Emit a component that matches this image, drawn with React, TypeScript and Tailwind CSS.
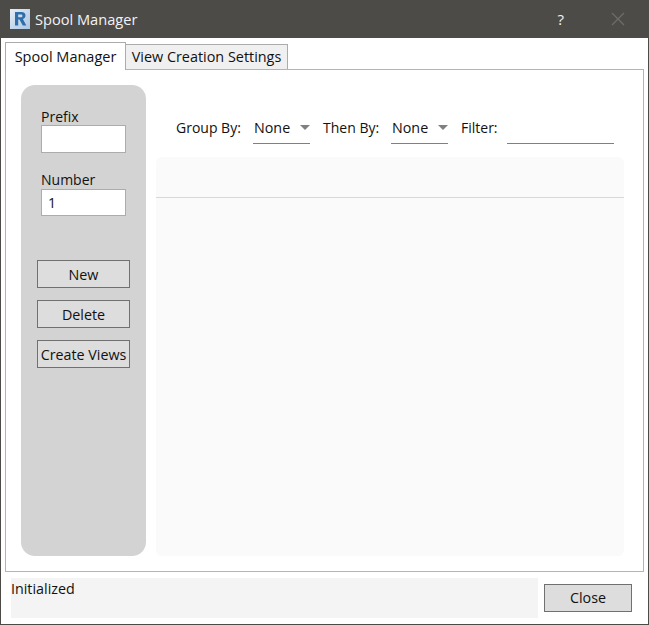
import { ReactNode } from "react";

function SideButton({ children }: { children: ReactNode }) {
  return (
    <button className="flex h-[28px] w-[93px] items-center justify-center border border-[#707070] bg-[#dddddd] pt-[1px] text-[14.3px] text-[#111]">
      {children}
    </button>
  );
}

function Combo() {
  return (
    <div className="flex h-[28px] w-[57px] items-center justify-between border-b border-[#808080]">
      <span className="pb-[3px] pl-[1px] text-[14.3px]">None</span>
      <span className="mb-[5px] h-0 w-0 border-x-[5px] border-t-[5px] border-x-transparent border-t-[#808080]" />
    </div>
  );
}

export default function App() {
  return (
    <div className="flex h-[625px] w-[649px] flex-col overflow-hidden border-x border-b border-[#4d4b48] bg-white font-['Open_Sans',sans-serif] text-[14px] leading-[20px] text-[#111]">
      <header className="flex h-[38px] shrink-0 items-center bg-[#4d4b48] pl-[9px] text-[#f2f2f2]">
        <svg width="20" height="20" viewBox="0 0 20 20" className="shrink-0">
          <defs>
            <linearGradient id="rvt" x1="0" y1="0" x2="1" y2="1">
              <stop offset="0" stopColor="#e4edf6" />
              <stop offset="1" stopColor="#a9c6e4" />
            </linearGradient>
          </defs>
          <rect width="20" height="20" fill="url(#rvt)" />
          <path d="M5 3h6.5c2.6 0 4 1.4 4 3.6 0 1.8-1 3-2.6 3.4l3.4 6.500h-3.500L9.400 10.500H8.200v6H5z M8.200 5.600v2.700h2.700c1 0 1.500-.5 1.500-1.350s-.5-1.350-1.500-1.350z" fill="#2f6ea8" fillRule="evenodd" />
        </svg>
        <span className="ml-[5px] text-[14.6px]">Spool Manager</span>
        <span className="ml-auto text-[15px]">?</span>
        <svg width="14" height="14" viewBox="0 0 14 14" className="ml-[47px] mr-[23px]">
          <path d="M1 1l12 12M13 1L1 13" stroke="#6f6d6a" strokeWidth="1.200" fill="none" />
        </svg>
      </header>

      <div className="flex min-h-0 flex-1 flex-col px-[4px]">
        <div className="mt-[4px] flex h-[27px] shrink-0 items-end">
          <div className="relative z-10 -mb-[1px] flex h-[28px] w-[121px] items-center justify-center border border-b-0 border-[#acacac] bg-white text-[14.5px]">
            Spool Manager
          </div>
          <div className="flex h-[25px] w-[162px] items-center justify-center border border-b-0 border-l-0 border-[#acacac] bg-[#f0f0f0] pb-[1px] text-[14.4px]">
            View Creation Settings
          </div>
        </div>

        <div className="flex h-[503px] shrink-0 gap-[10px] border border-[#b4b4b4] p-[15px] pr-[19px]">
          <aside className="flex w-[125px] shrink-0 flex-col rounded-[14px] bg-[#d3d3d3] px-[16px] pt-[21px]">
            <label className="ml-[4px] h-[19px] pt-[1px]">Prefix</label>
            <input className="ml-[4px] h-[28px] w-[85px] border border-[#acacac] bg-white" />
            <label className="ml-[4px] mt-[17px] h-[19px]">Number</label>
            <input
              readOnly
              value="1"
              className="ml-[4px] h-[27px] w-[85px] border border-[#acacac] bg-white pl-[6px] text-[#111]"
            />
            <div className="mt-[44px] flex flex-col gap-[12px]">
              <SideButton>New</SideButton>
              <SideButton>Delete</SideButton>
              <SideButton>Create Views</SideButton>
            </div>
          </aside>

          <section className="flex min-w-0 flex-1 flex-col pt-[28px]">
            <div className="flex h-[31px] shrink-0 items-end">
              <span className="mb-[6px] ml-[20px] w-[77px]">Group By:</span>
              <Combo />
              <span className="mb-[6px] ml-[13px] w-[68px]">Then By:</span>
              <Combo />
              <span className="mb-[6px] ml-[13px] w-[46px]">Filter:</span>
              <div className="h-[28px] w-[107px] border-b border-[#808080]" />
            </div>
            <div className="mt-[13px] flex-1 rounded-[6px] bg-[#fafafa]">
              <div className="h-[41px] border-b border-[#d8d8d8]" />
            </div>
          </section>
        </div>

        <footer className="flex flex-1 items-center pl-[6px]">
          <div className="h-[40px] w-[527px] bg-[#f4f4f4] pt-[1px] text-[14.3px]">Initialized</div>
          <button className="ml-[6px] flex h-[28px] w-[88px] items-center justify-center border border-[#707070] bg-[#dddddd] text-[14.3px]">
            Close
          </button>
        </footer>
      </div>
    </div>
  );
}
